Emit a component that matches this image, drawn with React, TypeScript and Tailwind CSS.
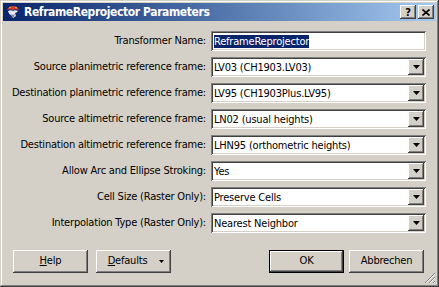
import React from 'react';

const FONT = { fontFamily: '"DejaVu Sans Condensed", Tahoma, "Liberation Sans", sans-serif' };

const raised =
  'shadow-[inset_-1px_-1px_#404040,inset_1px_1px_#ffffff,inset_-2px_-2px_#808080,inset_2px_2px_#d4d0c8]';
const sunken =
  'shadow-[inset_1px_1px_#808080,inset_-1px_-1px_#ffffff,inset_2px_2px_#404040,inset_-2px_-2px_#d4d0c8]';

const rows = [
  { label: 'Source planimetric reference frame:', value: 'LV03 (CH1903.LV03)' },
  { label: 'Destination planimetric reference frame:', value: 'LV95 (CH1903Plus.LV95)' },
  { label: 'Source altimetric reference frame:', value: 'LN02 (usual heights)' },
  { label: 'Destination altimetric reference frame:', value: 'LHN95 (orthometric heights)' },
  { label: 'Allow Arc and Ellipse Stroking:', value: 'Yes' },
  { label: 'Cell Size (Raster Only):', value: 'Preserve Cells' },
  { label: 'Interpolation Type (Raster Only):', value: 'Nearest Neighbor' },
];

const Arrow = () => (
  <svg width="7" height="4" viewBox="0 0 7 4">
    <path d="M0 0h7L3.5 4z" fill="#000" />
  </svg>
);

const Combo: React.FC<{ value: string }> = ({ value }) => (
  <div className={`w-[215px] h-[20px] bg-white ${sunken} flex items-center pl-[3px] pr-[2px]`}>
    <span className="flex-1 text-[11px] tracking-[-0.2px] text-black leading-none">{value}</span>
    <div className={`w-[16px] h-[16px] bg-[#d4d0c8] ${raised} flex items-center justify-center`}>
      <Arrow />
    </div>
  </div>
);

const Button: React.FC<{ children: React.ReactNode; def?: boolean; className?: string }> = ({ children, def, className }) => (
  <div
    className={`w-[75px] h-[23px] bg-[#d4d0c8] flex items-center justify-center text-[11px] tracking-[-0.2px] text-black ${
      def
        ? 'shadow-[inset_0_0_0_1px_#000000,inset_-2px_-2px_#404040,inset_2px_2px_#ffffff,inset_-3px_-3px_#808080]'
        : raised
    } ${className ?? ''}`}
  >
    {children}
  </div>
);

export default function App() {
  return (
    <div
      className="relative w-[439px] h-[287px] bg-[#d4d0c8] p-[3px] flex flex-col shadow-[inset_-1px_-1px_#404040,inset_1px_1px_#d4d0c8,inset_-2px_-2px_#808080,inset_2px_2px_#ffffff]"
      style={FONT}
    >
      {/* title bar */}
      <div className="h-[18px] bg-gradient-to-r from-[#0a246a] to-[#a6caf0] flex items-center pl-[2px] pr-[2px]">
        <svg width="16" height="16" viewBox="0 0 16 16" className="mr-[3px]">
          <path d="M2 6c1-3 4-4 6-4s5 1 6 4c-2-1-4-1-6 0-2-1-4-1-6 0z" fill="#d83a2a" />
          <path d="M3 7c2-1 4-1 5 0 1-1 3-1 5 0-1 1-2 2-3 2l1 3-3 2-2-3c-1 0-2-1-3-4z" fill="#e8e8f0" />
          <path d="M6 10l2 1 2-1-1 3H7z" fill="#8a8aa0" />
          <path d="M4 4l2-1M10 3l2 1" stroke="#f4b040" strokeWidth="1" />
        </svg>
        <span className="flex-1 text-white font-bold text-[12px] leading-none tracking-[-0.4px]">
          ReframeReprojector Parameters
        </span>
        <div className={`w-[16px] h-[14px] bg-[#d4d0c8] ${raised} flex items-center justify-center text-[11px] font-bold text-black leading-none`}>
          ?
        </div>
        <div className={`w-[16px] h-[14px] ml-[2px] bg-[#d4d0c8] ${raised} flex items-center justify-center`}>
          <svg width="8" height="7" viewBox="0 0 8 7">
            <path d="M0.5 0.5l7 6M7.5 0.5l-7 6" stroke="#000" strokeWidth="1.6" />
          </svg>
        </div>
      </div>

      {/* form */}
      <div className="flex flex-col gap-[6px] mt-[10px]">
        <div className="flex items-center">
          <span className="w-[203px] text-right text-[11px] tracking-[-0.2px] text-black">Transformer Name:</span>
          <div className={`ml-[5px] w-[215px] h-[20px] bg-white ${sunken} flex items-center pl-[3px]`}>
            <span className="bg-[#0a246a] text-white text-[11px] tracking-[-0.2px] leading-[13px]">ReframeReprojector</span>
          </div>
        </div>
        {rows.map((r) => (
          <div key={r.label} className="flex items-center">
            <span className="w-[203px] text-right text-[11px] tracking-[-0.2px] text-black">{r.label}</span>
            <div className="ml-[5px]">
              <Combo value={r.value} />
            </div>
          </div>
        ))}
      </div>

      {/* buttons */}
      <div className="flex items-center mt-[17px] pl-[10px]">
        <Button>
          <span>
            <u>H</u>elp
          </span>
        </Button>
        <Button className="ml-[8px] relative">
          <span className="mr-[12px]">
            <u>D</u>efaults
          </span>
          <span className="absolute right-[7px] top-[10px]">
            <svg width="5" height="3" viewBox="0 0 5 3">
              <path d="M0 0h5L2.5 3z" fill="#000" />
            </svg>
          </span>
        </Button>
        <div className="flex-1" />
        <Button def>OK</Button>
        <Button className="ml-[5px] mr-[12px]">Abbrechen</Button>
      </div>

      {/* resize grip */}
      <svg width="12" height="12" viewBox="0 0 12 12" className="absolute right-[3px] bottom-[3px]">
        <path d="M11 1L1 11M11 5L5 11M11 9L9 11" stroke="#808080" strokeWidth="1" />
        <path d="M11 2L2 11M11 6L6 11M11 10L10 11" stroke="#ffffff" strokeWidth="1" />
      </svg>
    </div>
  );
}
